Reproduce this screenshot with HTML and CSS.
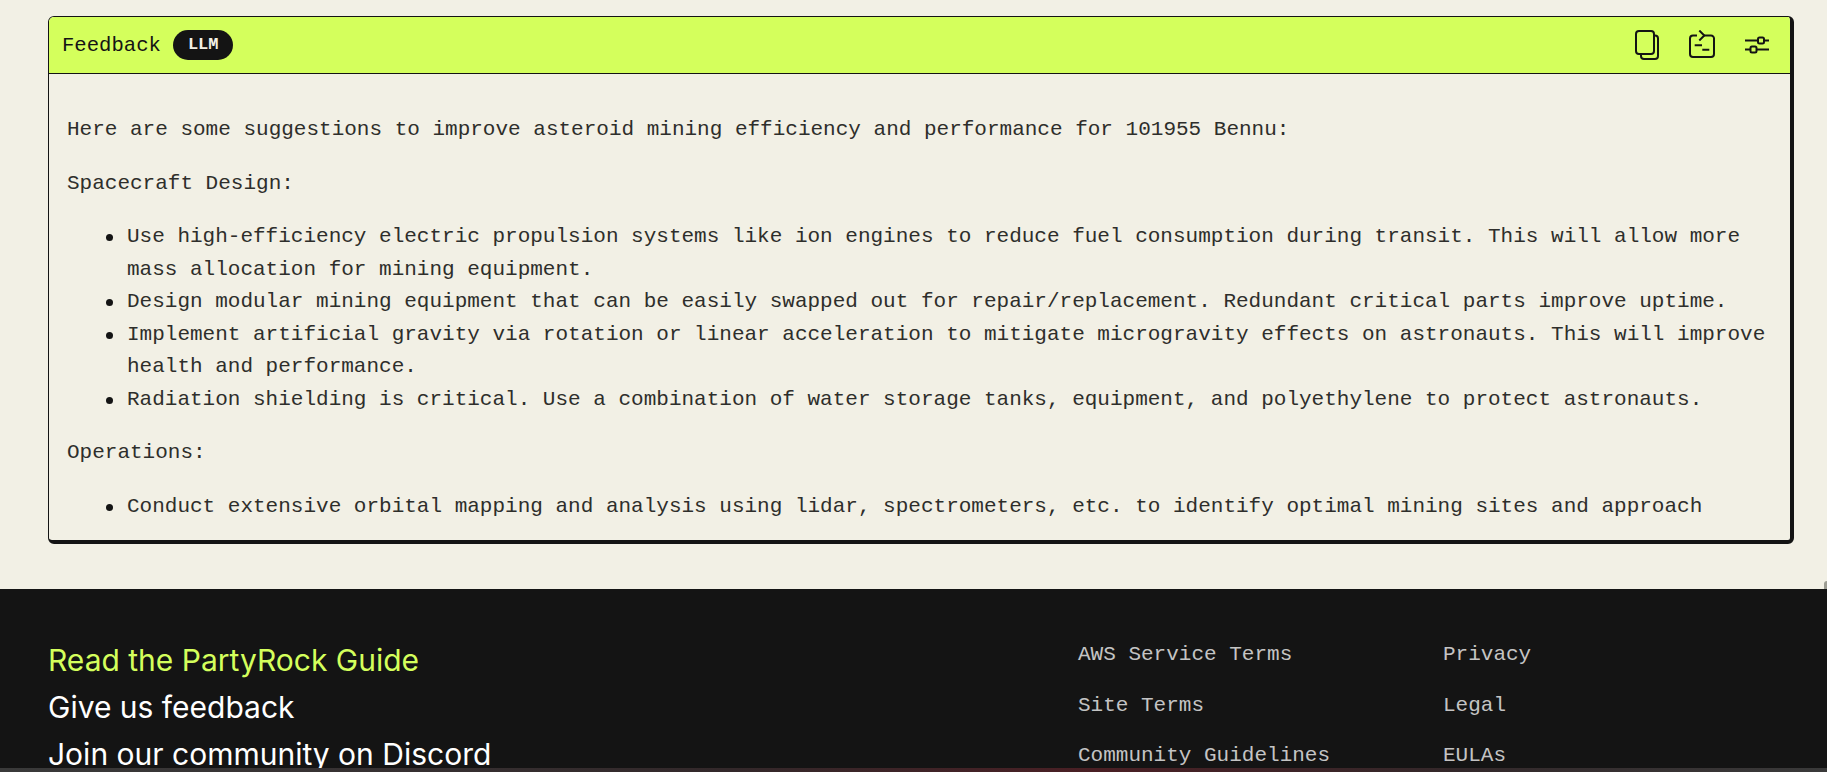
FILE: index.html
```html
<!DOCTYPE html>
<html lang="en">
<head>
    <meta charset="UTF-8">
    <meta name="viewport" content="width=device-width, initial-scale=1.0">
    <title>PartyRock</title>
    <link rel="stylesheet" href="styles.css">
</head>
<body>
    <!-- Main Content Area -->
    <div class="main-content">
        <div class="widget">
            <div class="widget-header">
                <div class="widget-title">
                    <span>Feedback</span>
                    <span class="badge">LLM</span>
                </div>
                <div class="widget-icons">
                    <svg viewBox="0 0 24 30" width="24" height="30" fill="none" stroke="#141414" stroke-width="2">
                        <rect x="1" y="1" width="18" height="23" rx="3"/>
                        <path d="M19 5.500h1a3 3 0 0 1 3 3V26a3 3 0 0 1-3 3H9a3 3 0 0 1-3-3v-2"/>
                    </svg>
                    <svg viewBox="0 0 26 30" width="26" height="30" fill="none" stroke="#141414" stroke-width="2">
                        <path d="M8 5.500H4a3 3 0 0 0-3 3V24a3 3 0 0 0 3 3h18a3 3 0 0 0 3-3V8.500a3 3 0 0 0-3-3h-8"/>
                        <path d="M10.300 0.500l5 5-5 5"/>
                        <path d="M5.700 15.200H13M13.300 19.800h7"/>
                    </svg>
                    <svg viewBox="0 0 24 18" width="24" height="18" fill="none" stroke="#141414" stroke-width="2">
                        <path d="M0 4.500h12.500M19 4.500h5M0 13.500h5M11.500 13.500h12.500"/>
                        <rect x="13" y="1.500" width="6" height="6" rx="1.500"/>
                        <rect x="5.500" y="10.500" width="6" height="6" rx="1.500"/>
                    </svg>
                </div>
            </div>
            <div class="widget-body">
                <p>Here are some suggestions to improve asteroid mining efficiency and performance for 101955 Bennu:</p>
                <p>Spacecraft Design:</p>
                <ul>
                    <li>Use high-efficiency electric propulsion systems like ion engines to reduce fuel consumption during transit. This will allow more mass allocation for mining equipment.</li>
                    <li>Design modular mining equipment that can be easily swapped out for repair/replacement. Redundant critical parts improve uptime.</li>
                    <li>Implement artificial gravity via rotation or linear acceleration to mitigate microgravity effects on astronauts. This will improve health and performance.</li>
                    <li>Radiation shielding is critical. Use a combination of water storage tanks, equipment, and polyethylene to protect astronauts.</li>
                </ul>
                <p>Operations:</p>
                <ul>
                    <li>Conduct extensive orbital mapping and analysis using lidar, spectrometers, etc. to identify optimal mining sites and approach</li>
                </ul>
            </div>
        </div>
    </div>

    <!-- Footer -->
    <div class="footer">
        <span class="scroll-thumb"></span>
        <div class="footer-row">
            <div class="footer-big">
                <a href="#" class="guide">Read the PartyRock Guide</a>
                <a href="#">Give us feedback</a>
                <a href="#">Join our community on Discord</a>
            </div>
            <div class="footer-links">
                <a href="#">AWS Service Terms</a>
                <a href="#">Privacy</a>
                <a href="#">Site Terms</a>
                <a href="#">Legal</a>
                <a href="#">Community Guidelines</a>
                <a href="#">EULAs</a>
            </div>
        </div>
        <div class="window-edge"></div>
    </div>
</body>
</html>
```

FILE: styles.css
```css
/* Global Styles */
* {
    margin: 0;
    padding: 0;
    box-sizing: border-box;
}

html, body {
    height: 772px;
    overflow: hidden;
}

body {
    font-family: "Liberation Mono", monospace;
    background-color: #f2f0e5;
    color: #141414;
}

/* Main Content Area */
.main-content {
    height: 589px;
    padding: 16px 33px 0 48px;
}

.widget {
    height: 528px;
    border: 1px solid #141414;
    border-right-width: 4px;
    border-bottom-width: 4px;
    border-radius: 6px;
    overflow: hidden;
}

.widget-header {
    height: 57px;
    background-color: #d4ff5c;
    border-bottom: 1px solid #141414;
    display: flex;
    justify-content: space-between;
    align-items: center;
    padding: 0 21px 0 13px;
}

.widget-title {
    display: flex;
    align-items: center;
    gap: 12px;
    font-size: 20.600px;
}

.badge {
    background-color: #141414;
    color: #f2f0e5;
    font-size: 17px;
    font-weight: bold;
    padding: 5px 15px;
    border-radius: 15px;
    line-height: 20px;
}

.widget-icons {
    display: flex;
    align-items: center;
    gap: 30px;
}

.widget-body {
    height: 470px;
    overflow: hidden;
    padding: 40px 18px 0 18px;
    font-size: 21px;
    line-height: 32.500px;
    color: #2e2e2b;
}

.widget-body p {
    margin-bottom: 21px;
}

.widget-body ul {
    list-style: none;
    padding-left: 60px;
    margin-bottom: 21px;
}

.widget-body li {
    position: relative;
}

.widget-body li::before {
    content: "";
    position: absolute;
    left: -21px;
    top: 13px;
    width: 7px;
    height: 7px;
    border-radius: 50%;
    background-color: #141414;
}

/* Footer */
.footer {
    position: relative;
    height: 183px;
    background-color: #141414;
    display: flex;
    flex-direction: column;
}

.footer-row {
    flex: 1;
    min-height: 0;
    overflow: hidden;
    display: flex;
    padding: 52px 0 0 48px;
}

.footer-big {
    width: 1030px;
    display: flex;
    flex-direction: column;
    gap: 9px;
}

.footer-big a {
    font-family: "Inter", sans-serif;
    font-size: 30px;
    line-height: 38px;
    color: #fff;
    text-decoration: none;
}

.footer-big a.guide {
    color: #d4ff5c;
}

.footer-links {
    display: grid;
    grid-template-columns: 365px 200px;
    grid-auto-rows: 50.500px;
    font-size: 21px;
    padding-top: 2px;
}

.footer-links a {
    color: #c4c4c4;
    text-decoration: none;
}

/* edge of the window under the page */
.window-edge {
    height: 4px;
    background: linear-gradient(90deg, #3a3a3a 0%, #33282a 40%, #4a1f24 60%, #33282a 80%, #3a3a3a 100%);
}

.scroll-thumb {
    position: absolute;
    right: 0;
    top: -8px;
    width: 3px;
    height: 8px;
    background-color: #9c9c92;
    border-top-left-radius: 3px;
}
```
